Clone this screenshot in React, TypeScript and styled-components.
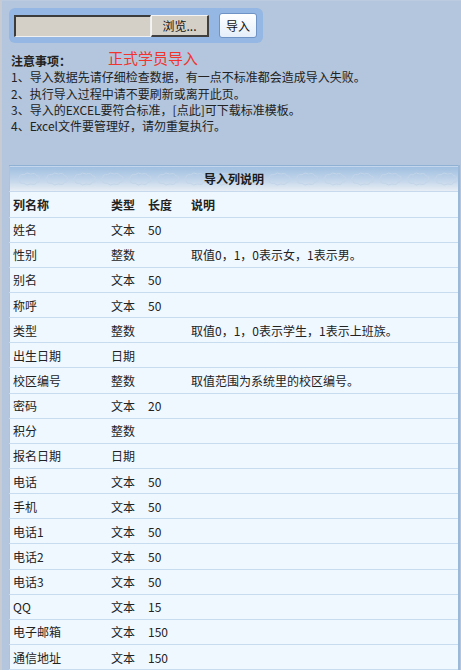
import styled, { createGlobalStyle } from 'styled-components';

const GlobalStyle = createGlobalStyle`
  html, body {
    margin: 0;
    padding: 0;
  }

  body {
    background: #b3c6dd;
    font-family: "Noto Sans CJK SC", "Microsoft YaHei", sans-serif;
    font-size: 12px;
    color: #222;
    border-left: 2px solid #c8ccd2;
    border-top: 1px solid #bccbe0;
    min-height: 670px;
    box-sizing: border-box;
  }
`;

const Page = styled.div`
  padding: 7px 2px 0 7px;
`;

const UploadPanel = styled.div`
  display: inline-flex;
  align-items: center;
  gap: 10px;
  padding: 5px 6px 5px 5px;
  background: #95b7e3;
  border-radius: 6px;
`;

const FileInput = styled.div`
  display: flex;
  height: 22px;
`;

const FileField = styled.div`
  width: 134px;
  background: #d4d0c8;
  border-top: 2px solid #3c3c3c;
  border-left: 2px solid #3c3c3c;
  border-right: 1px solid #f0f0f0;
  border-bottom: 1px solid #f0f0f0;
`;

const BrowseButton = styled.div`
  width: 55px;
  display: flex;
  align-items: center;
  justify-content: center;
  background: #d4d0c8;
  border-top: 1px solid #f4f4f4;
  border-left: 1px solid #f4f4f4;
  border-right: 2px solid #404040;
  border-bottom: 2px solid #404040;
  font-size: 12px;
  color: #111;
`;

const ImportButton = styled.button`
  height: 25px;
  padding: 0 6px;
  background: linear-gradient(#ffffff, #e4eefa);
  border: 1px solid #6f93c4;
  border-radius: 3px;
  font-family: inherit;
  font-size: 12px;
  color: #111;
`;

const Notes = styled.div`
  margin-top: 10px;
  padding-left: 2px;
  line-height: 16.3px;
  color: #222;
`;

const NoteTitle = styled.div`
  font-weight: bold;
  display: flex;
  align-items: flex-end;
  gap: 37px;
`;

const RedTitle = styled.span`
  font-weight: normal;
  font-size: 15px;
  color: #f0352f;
  position: relative;
  top: -3px;
`;

const Table = styled.table`
  margin-top: 31px;
  width: 451px;
  border-collapse: collapse;
  background: #f0f8ff;
  border-top: 1px solid #8fb1d3;
  border-right: 2px solid #9ab8d8;
  border-left: 1px solid #a9c4e0;
`;

const HeadCell = styled.th`
  position: relative;
  height: 25px;
  padding: 0;
  background: linear-gradient(#9fbee0, #c6d8eb 60%, #e9eff5);
  border-bottom: 1px solid #c7d9ec;
  font-weight: bold;
  font-size: 12px;
  color: #1a1a1a;
  overflow: hidden;
`;

const HeadText = styled.span`
  position: relative;
`;

const Clouds = styled.svg`
  position: absolute;
  left: 0;
  top: 0;
  width: 451px;
  height: 25px;
`;

const Row = styled.tr`
  height: 25.15px;
  border-bottom: 1px solid #c7dcef;
`;

const Cell = styled.td<{ $w?: number; $bold?: boolean }>`
  padding: 0 0 0 3px;
  width: ${({ $w }) => ($w ? `${$w}px` : 'auto')};
  font-weight: ${({ $bold }) => ($bold ? 'bold' : 'normal')};
  white-space: nowrap;
  color: #222;
`;

const columns: [string, string, string, string][] = [
  ['姓名', '文本', '50', ''],
  ['性别', '整数', '', '取值0，1，0表示女，1表示男。'],
  ['别名', '文本', '50', ''],
  ['称呼', '文本', '50', ''],
  ['类型', '整数', '', '取值0，1，0表示学生，1表示上班族。'],
  ['出生日期', '日期', '', ''],
  ['校区编号', '整数', '', '取值范围为系统里的校区编号。'],
  ['密码', '文本', '20', ''],
  ['积分', '整数', '', ''],
  ['报名日期', '日期', '', ''],
  ['电话', '文本', '50', ''],
  ['手机', '文本', '50', ''],
  ['电话1', '文本', '50', ''],
  ['电话2', '文本', '50', ''],
  ['电话3', '文本', '50', ''],
  ['QQ', '文本', '15', ''],
  ['电子邮箱', '文本', '150', ''],
  ['通信地址', '文本', '150', ''],
];

// scalloped cloud outline around (cx, cy)
const cloudPath = (cx: number, cy: number) => {
  const rx = 10;
  const ry = 5;
  const n = 9;
  let d = '';
  for (let k = 0; k <= n; k++) {
    const a = (k / n) * Math.PI * 2;
    const x = cx + rx * Math.cos(a);
    const y = cy + ry * Math.sin(a);
    if (k === 0) {
      d += `M${x.toFixed(1)} ${y.toFixed(1)}`;
    } else {
      const m = ((k - 0.5) / n) * Math.PI * 2;
      const qx = cx + (rx + 3) * Math.cos(m);
      const qy = cy + (ry + 2.5) * Math.sin(m);
      d += ` Q${qx.toFixed(1)} ${qy.toFixed(1)} ${x.toFixed(1)} ${y.toFixed(1)}`;
    }
  }
  return d + ' Z';
};

const CloudStrip = () => (
  <Clouds viewBox="0 0 451 25">
    {Array.from({ length: 17 }).map((_, i) => (
      <path
        key={i}
        d={cloudPath(19 + i * 27.8, 13)}
        fill="none"
        stroke="#c3d5e9"
        strokeWidth="1"
      />
    ))}
  </Clouds>
);

export default function App() {
  return (
    <Page>
      <GlobalStyle />
      <UploadPanel>
        <FileInput>
          <FileField />
          <BrowseButton>浏览...</BrowseButton>
        </FileInput>
        <ImportButton>导入</ImportButton>
      </UploadPanel>

      <Notes>
        <NoteTitle>
          注意事项：<RedTitle>正式学员导入</RedTitle>
        </NoteTitle>
        <div>1、导入数据先请仔细检查数据，有一点不标准都会造成导入失败。</div>
        <div>2、执行导入过程中请不要刷新或离开此页。</div>
        <div>3、导入的EXCEL要符合标准，[点此]可下载标准模板。</div>
        <div>4、Excel文件要管理好，请勿重复执行。</div>
      </Notes>

      <Table>
        <thead>
          <tr>
            <HeadCell colSpan={4}>
              <CloudStrip />
              <HeadText>导入列说明</HeadText>
            </HeadCell>
          </tr>
        </thead>
        <tbody>
          <Row>
            <Cell $w={95} $bold>列名称</Cell>
            <Cell $w={34} $bold>类型</Cell>
            <Cell $w={40} $bold>长度</Cell>
            <Cell $bold>说明</Cell>
          </Row>
          {columns.map(([name, type, len, desc]) => (
            <Row key={name}>
              <Cell>{name}</Cell>
              <Cell>{type}</Cell>
              <Cell>{len}</Cell>
              <Cell>{desc}</Cell>
            </Row>
          ))}
        </tbody>
      </Table>
    </Page>
  );
}
